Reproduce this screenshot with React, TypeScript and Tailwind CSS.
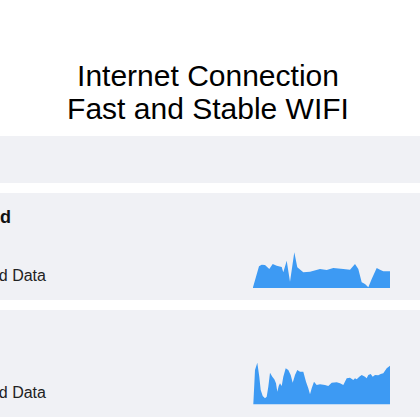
const uploadPath =
  'M0,36 L0,35.3 L6,14.3 L8.7,12.7 L12,13 L16.3,17 L19.7,12 L23.7,13.7 L28.7,15 L30.3,20.3 L33.7,8.7 L37,29.7 L41.3,0.3 L44.3,15.3 L50.3,20.3 L57,19.7 L67,17 L73.7,18 L80.3,16 L90.3,17 L97,17.7 L102,12 L105.3,17 L108.7,30.3 L112,32 L115.3,35.3 L118.7,27 L123.7,16 L127,17.7 L130.3,19.3 L137,19.3 L137,36 Z';

const downloadPath =
  'M0.3,42.3 L2,8 L4.3,0.7 L6.3,14.7 L7.7,28 L9.7,34 L12,36.3 L13.7,34.7 L15.3,24.7 L17,10.7 L19.3,14.7 L21.3,17.3 L23,21.3 L24.3,29.7 L25.7,24 L27,21.3 L28.7,24 L30.3,14.7 L32.7,6.3 L35.3,8 L37.7,13 L39.7,20.7 L42,13 L44.3,8 L47,9.7 L50.3,9.7 L53,19.7 L55.3,26.3 L57,32.3 L58.7,26.3 L61,19.7 L63.7,23 L67,22.3 L72,23 L75.3,24 L78.7,20.7 L83.7,20.3 L87,21.3 L90.3,23 L93.7,16.3 L97,15.7 L100.3,18 L102,16.3 L103.7,17.3 L106.3,14.7 L108.7,13 L112,14.7 L113.7,16.3 L115.3,13 L117.7,12 L119.7,14.7 L122,13 L125.3,13.3 L127.7,12 L130.3,11.3 L133.7,6.3 L137,3.7 L137,42.3 Z';

type StatCardProps = {
  title?: string;
  label: string;
  path: string;
  height: number;
};

function StatCard({ title, label, path, height }: StatCardProps) {
  return (
    <div className="flex items-end justify-between bg-[#f0f1f5] pt-3 pb-3 h-[107px] overflow-hidden">
      <div className="ml-[-43px] flex flex-col">
        <h3 className="h-6 text-[18px] leading-6 font-bold text-[#111] whitespace-nowrap">{title}</h3>
        <p className="mt-[35px] text-[16px] leading-6 text-[#222] whitespace-nowrap">{label}</p>
      </div>
      <svg
        width={137}
        height={height}
        viewBox={`0 0 137 ${height}`}
        preserveAspectRatio="none"
        className="mr-[30px] shrink-0"
      >
        <path d={path} fill="#3d9af3" />
      </svg>
    </div>
  );
}

export default function App() {
  return (
    <div className="w-[420px] h-[420px] overflow-hidden bg-white font-['Liberation_Sans',Arial,sans-serif]">
      <header className="pt-[59px] pb-[11px] pr-[4px] text-center">
        <h1 className="text-[30px] leading-[33px] font-normal text-black">
          Internet Connection
          <br />
          Fast and Stable WIFI
        </h1>
      </header>

      <div className="h-[47px] bg-[#f0f1f5]" />

      <div className="mt-[10px] flex flex-col gap-[10px]">
        <StatCard title="Speed" label="Upload Data" path={uploadPath} height={36} />
        <StatCard label="Upload Data" path={downloadPath} height={43} />
      </div>
    </div>
  );
}
